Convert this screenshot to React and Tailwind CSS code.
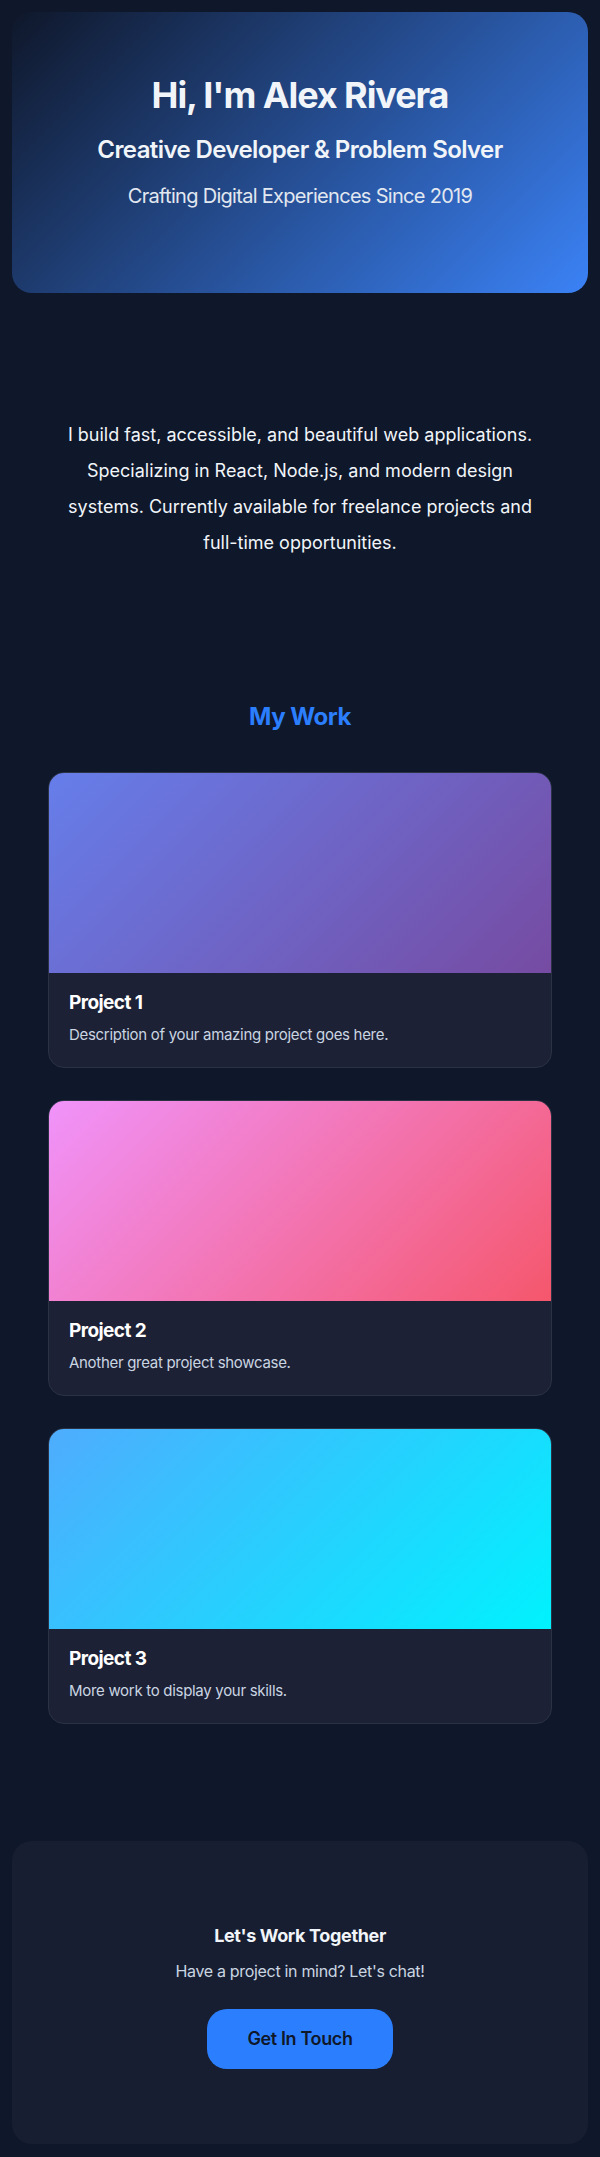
import React from 'react';

const projects = [
  {
    title: 'Project 1',
    text: 'Description of your amazing project goes here.',
    bg: 'bg-[linear-gradient(135deg,#667eea_0%,#764ba2_100%)]',
  },
  {
    title: 'Project 2',
    text: 'Another great project showcase.',
    bg: 'bg-[linear-gradient(135deg,#f093fb_0%,#f5576c_100%)]',
  },
  {
    title: 'Project 3',
    text: 'More work to display your skills.',
    bg: 'bg-[linear-gradient(135deg,#4facfe_0%,#00f2fe_100%)]',
  },
];

export default function App() {
  return (
    <div className="min-h-screen bg-[#0f172a] px-3 pt-3 pb-[13px] font-['Inter',sans-serif] text-slate-100">
      {/* Hero */}
      <header className="rounded-[20px] bg-[linear-gradient(135deg,#0f172a_0%,#3b82f6_100%)] pt-[63px] pb-[83px] text-center">
        <h1 className="mb-[19px] text-4xl leading-10 font-bold tracking-[-0.03em] text-slate-100">Hi, I'm Alex Rivera</h1>
        <h2 className="mb-4 text-2xl leading-8 font-semibold tracking-tight text-slate-100">Creative Developer &amp; Problem Solver</h2>
        <p className="text-xl leading-7 tracking-[-0.035em] text-slate-200">Crafting Digital Experiences Since 2019</p>
      </header>

      {/* About */}
      <section className="pt-[124px] pb-[140px]">
        <p className="mx-auto max-w-[490px] text-center text-lg leading-9 text-slate-100">
          I build fast, accessible, and beautiful web applications. Specializing in React, Node.js, and modern design systems. Currently available for freelance projects and full-time opportunities.
        </p>
      </section>

      {/* Work */}
      <section className="px-9">
        <h2 className="mb-[39px] text-center text-2xl leading-8 font-bold tracking-[-0.02em] text-blue-500">My Work</h2>
        <div className="flex flex-col gap-8">
          {projects.map((p) => (
            <article key={p.title} className="overflow-hidden rounded-2xl border border-[#2a3244] bg-[#1c2135]">
              <div className={`h-[200px] ${p.bg}`} />
              <div className="px-5 pt-4 pb-5">
                <h3 className="text-[19px] leading-7 font-bold tracking-[-0.03em] text-white">{p.title}</h3>
                <p className="mt-[6px] text-[15px] leading-6 tracking-[-0.02em] text-slate-300">{p.text}</p>
              </div>
            </article>
          ))}
        </div>
      </section>

      {/* Contact */}
      <section className="mt-[117px] rounded-[20px] bg-[#171e31] pt-[81px] pb-[75px] text-center">
        <h2 className="text-lg leading-7 font-bold tracking-[-0.02em] text-slate-100">Let's Work Together</h2>
        <p className="mt-[9px] text-base leading-6 tracking-[-0.02em] text-slate-300">Have a project in mind? Let's chat!</p>
        <button className="mt-[26px] rounded-[20px] bg-blue-500 px-10 py-4 text-lg leading-7 font-semibold tracking-[-0.02em] text-[#0f172a]">
          Get In Touch
        </button>
      </section>
    </div>
  );
}
